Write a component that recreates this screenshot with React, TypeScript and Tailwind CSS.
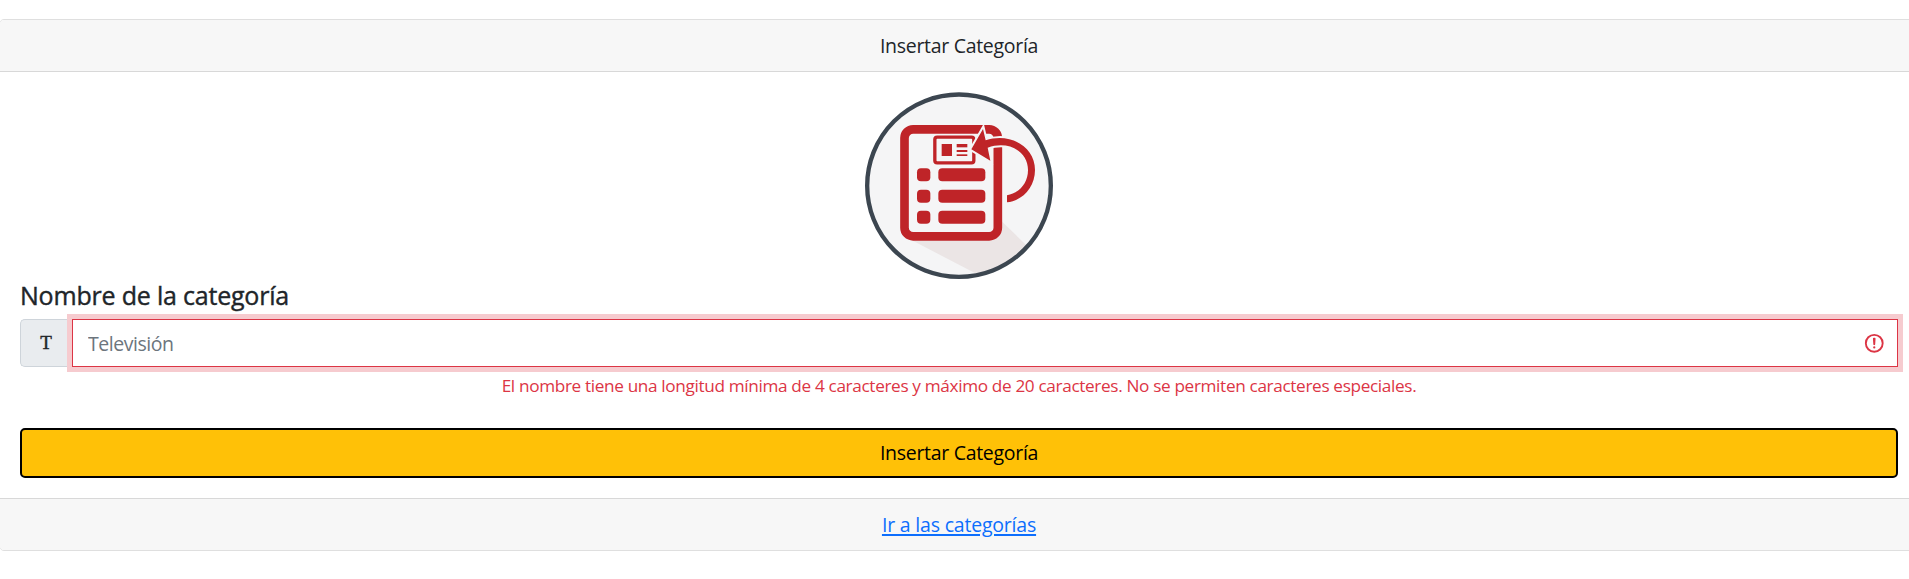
function CategoryLogo() {
  return (
    <svg viewBox="30 36 564 564" className="block h-[188px] w-[188px] shrink-0" aria-hidden="true">
      <defs>
        <clipPath id="disc">
          <ellipse cx="312" cy="317" rx="271" ry="269" />
        </clipPath>
      </defs>
      <ellipse cx="312" cy="317" rx="275.500" ry="273.500" fill="#f5f5f6" />
      <path d="M165 478 L400 600 L560 540 L440 424 Z" fill="#ebe5e5" clipPath="url(#disc)" />
      <ellipse cx="312" cy="317" rx="275.500" ry="273.500" fill="none" stroke="#3c4650" strokeWidth="13" />
      <rect x="148.500" y="148" width="280" height="321" rx="26" fill="#f5f5f6" stroke="#bf2428" strokeWidth="26" />
      <rect x="239.500" y="171.500" width="117" height="77" rx="7" fill="#f5f5f6" stroke="#bf2428" strokeWidth="10" />
      <g fill="#bf2428">
        <rect x="260" y="192" width="31" height="36" />
        <rect x="305" y="192" width="32" height="10" />
        <rect x="305" y="210" width="32" height="6" />
        <rect x="305" y="223" width="32" height="5" />
        <rect x="186" y="265" width="40" height="39" rx="12" />
        <rect x="250" y="265" width="141" height="39" rx="12" />
        <rect x="186" y="329" width="40" height="39" rx="12" />
        <rect x="250" y="329" width="141" height="39" rx="12" />
        <rect x="186" y="392" width="40" height="39" rx="12" />
        <rect x="250" y="392" width="141" height="39" rx="12" />
      </g>
      <path
        d="M349 208 L384 147 L392 181 C466 157 540 200 540 270 C540 322 503 362 456 367 L456 346 C490 340 519 312 519 270 C519 215 462 180 398 203 L406 242 Z"
        fill="#bf2428"
        stroke="#f5f5f6"
        strokeWidth="12"
        strokeLinejoin="miter"
        paintOrder="stroke"
      />
    </svg>
  );
}

function InvalidIcon() {
  return (
    <svg viewBox="0 0 12 12" className="h-[22.5px] w-[22.5px]" fill="none" stroke="#dc3545" aria-hidden="true">
      <circle cx="6" cy="6" r="4.500" />
      <path strokeLinejoin="round" d="M5.8 3.6h.4L6 6.500z" />
      <circle cx="6" cy="8.200" r=".6" fill="#dc3545" stroke="none" />
    </svg>
  );
}

export default function App() {
  return (
    <div className="h-[579px] w-full overflow-hidden bg-white pt-[19px] font-['Open_Sans','Noto_Sans',sans-serif] text-[19.5px] leading-[30px] text-[#212529]">
      <div className="-ml-px flex w-[1920px] flex-col overflow-hidden rounded-[5px] border border-[#dfdfdf] bg-white">
        <header className="flex h-[52px] items-center justify-center border-b border-[#d8d8d8] bg-[#f7f7f7]">
          <span className="tracking-[-0.3px]">Insertar Categoría</span>
        </header>
        <form className="flex flex-col px-5 pt-5 pb-5" onSubmit={(event) => event.preventDefault()}>
          <div className="flex h-[188px] justify-center">
            <CategoryLogo />
          </div>
          <label
            htmlFor="nombre"
            className="mb-[9px] flex h-[30px] items-center text-[25px] font-medium tracking-[-0.2px] [-webkit-text-stroke:0.4px_#212529]"
          >
            Nombre de la categoría
          </label>
          <div className="flex h-12">
            <span className="flex w-[52px] items-center justify-center rounded-l-[5px] border border-r-0 border-[#ced4da] bg-[#e9ecef] pr-px font-['Liberation_Serif',serif] text-[19px] [-webkit-text-stroke:0.4px_#212529]">
              T
            </span>
            <div className="relative flex flex-1 items-center border border-[#dc3545] bg-white pr-[11.25px] pl-[15px] shadow-[0_0_0_5px_#f6cbcf]">
              <input
                id="nombre"
                type="text"
                placeholder="Televisión"
                className="min-w-0 flex-1 bg-transparent pt-0.5 tracking-[-0.45px] outline-none placeholder:text-[#6c757d]"
              />
              <InvalidIcon />
            </div>
          </div>
          <p className="mt-[6px] flex h-[26px] items-center justify-center text-[17.2px] tracking-[-0.35px] text-[#dc3545]">
            El nombre tiene una longitud mínima de 4 caracteres y máximo de 20 caracteres. No se permiten caracteres
            especiales.
          </p>
          <button
            type="submit"
            className="mt-[29px] h-[50px] rounded-[5px] border-2 border-black bg-[#ffc107] tracking-[-0.3px] text-black"
          >
            Insertar Categoría
          </button>
        </form>
        <footer className="flex h-[52px] items-center justify-center border-t border-[#d8d8d8] bg-[#f7f7f7]">
          <a href="#categorias" className="tracking-[-0.2px] text-[#0d6efd] underline decoration-2 underline-offset-2">
            Ir a las categorías
          </a>
        </footer>
      </div>
    </div>
  );
}
